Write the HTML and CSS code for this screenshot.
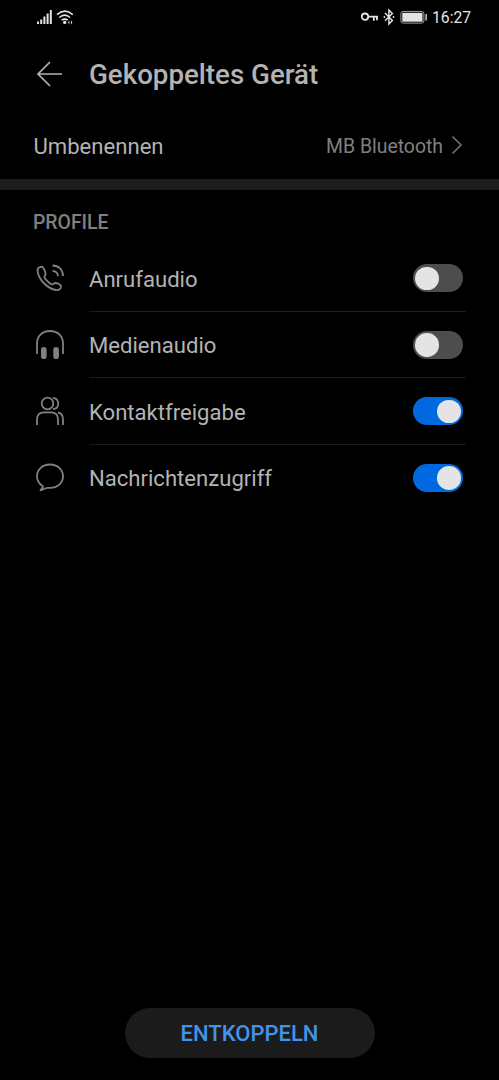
FILE: index.html
```html
<!DOCTYPE html>
<html lang="de">
<head>
  <meta charset="UTF-8" />
  <meta name="viewport" content="width=device-width, initial-scale=1" />
  <title>Gekoppeltes Gerät</title>
  <link rel="stylesheet" href="styles.css">
</head>
<body>

  <div class="statusbar">
    <svg class="status-left" width="70" height="35" viewBox="0 0 70 35" aria-hidden="true">
      <g fill="#e4e4e4">
        <rect x="12" y="21.5" width="2" height="2.5" />
        <rect x="15.2" y="19.5" width="2" height="4.5" />
        <rect x="18.4" y="16.5" width="2" height="7.5" />
        <rect x="21.6" y="13.5" width="2" height="10.5" />
        <rect x="24.8" y="10" width="2" height="14" />
        <circle cx="39.7" cy="22.4" r="1.7" />
        <path d="M43 22.5l1.4-2v4zM47.4 22.5l-1.4-2v4z" />
      </g>
      <path d="M32 14.6q7.9-7 15.8 0M34.3 17.5q5.4-4.6 10.8 0M36.7 20.2q3-2.2 6 0" fill="none" stroke="#e4e4e4" stroke-width="1.6" />
    </svg>
    <div class="status-right">
      <svg width="70" height="35" viewBox="0 0 70 35" aria-hidden="true">
        <g fill="none" stroke="#e4e4e4">
          <circle cx="5" cy="16.7" r="3.2" stroke-width="1.8" />
          <path d="M8.3 16.7H18M13.8 17v3.8M16.9 17v3.3" stroke-width="1.8" />
          <path d="M25 13l7.4 7.4-3.5 3.6V10l3.5 3.4-7.4 7.4" stroke-width="1.4" />
          <rect x="40.9" y="11.4" width="23" height="11.7" rx="2.2" stroke="#a0a0a0" stroke-width="1" />
        </g>
        <rect x="42.3" y="12.8" width="20.2" height="8.9" fill="#e4e4e4" />
        <rect x="65.4" y="14" width="1.5" height="6.5" fill="#c8c8c8" />
        <circle cx="24.4" cy="17" r=".9" fill="#e4e4e4" />
        <circle cx="33.5" cy="17" r=".9" fill="#e4e4e4" />
      </svg>
      <span class="time">16:27</span>
    </div>
  </div>

  <header class="header">
    <svg class="back" width="28" height="28" viewBox="0 0 28 28" aria-label="Zurück">
      <path d="M26 14H2M14 2L2 14l12 12" />
    </svg>
    <h1 class="title">Gekoppeltes Gerät</h1>
  </header>

  <div class="rename">
    <span class="label">Umbenennen</span>
    <span class="device">MB Bluetooth</span>
    <svg class="chevron" width="12" height="20" viewBox="0 0 12 20" aria-hidden="true">
      <path d="M1.5 1.5L10 10l-8.5 8.5" />
    </svg>
  </div>

  <div class="divider"></div>

  <h2 class="section">PROFILE</h2>

  <ul class="profiles">
    <li class="profile">
      <svg class="icon" viewBox="0 0 50 50" aria-hidden="true">
        <path d="M15.5 11.8C13.5 12.2 12.2 14.3 12.7 17C14 24.5 22 33.5 31 35C33.5 35.3 35.3 34.3 36 32.5C36.4 31.3 35.8 30.3 34.7 29.5C32.6 28.1 30.7 27.5 29 28.4L27.8 29.2C27 29.7 26 29.2 24.5 28C22.5 26.4 20.8 24.6 19.7 22.9C19.2 22.1 19.3 21.5 19.8 20.8C20.9 19.3 20.8 17.9 19.8 15.8L18.6 13.4C17.9 12.1 16.9 11.5 15.5 11.8Z" />
        <path d="M27.5 15.8C30.7 16 32.8 18 33 21.3M27.5 10.5C33.7 10.5 38 14.8 38 21" />
      </svg>
      <span class="name">Anrufaudio</span>
      <span class="toggle"></span>
    </li>
    <li class="profile">
      <svg class="icon" viewBox="0 0 50 50" aria-hidden="true">
        <path d="M12 32V21.5C12 14 17.5 9 25 9s13 5 13 12.5V32" />
        <rect class="solid" x="16" y="25" width="5.6" height="12" rx="2.8" />
        <rect class="solid" x="28.3" y="25" width="5.6" height="12" rx="2.8" />
      </svg>
      <span class="name">Medienaudio</span>
      <span class="toggle"></span>
    </li>
    <li class="profile">
      <svg class="icon" viewBox="0 0 50 50" aria-hidden="true">
        <circle cx="22.5" cy="15.5" r="5.8" />
        <path d="M27.8 9.8c3.4.3 5.4 2.7 5.4 5.7s-2 5.4-5.2 5.7" />
        <path d="M12 37v-5.5c0-4.7 2.5-7.2 7.2-7.2h6.6c4.7 0 7.2 2.5 7.2 7.2V37M33 24.5c3.3.6 5 3.2 5 7V37" />
      </svg>
      <span class="name">Kontaktfreigabe</span>
      <span class="toggle on"></span>
    </li>
    <li class="profile">
      <svg class="icon" viewBox="0 0 50 50" aria-hidden="true">
        <path d="M25 9.5c-7.5 0-13 5-13 11.8 0 4.2 2 7.5 5.4 9.5.6.4.7.9.3 1.5l-2.2 3 6-2.3c1-.3 2-.1 3.5-.1 7.5 0 13-4.9 13-11.6S32.5 9.5 25 9.5Z" />
      </svg>
      <span class="name">Nachrichtenzugriff</span>
      <span class="toggle on"></span>
    </li>
  </ul>

  <button class="unpair">ENTKOPPELN</button>

</body>
</html>
```
FILE: styles.css
```css
* {
  margin: 0;
  padding: 0;
  box-sizing: border-box;
}

body {
  display: flex;
  flex-direction: column;
  height: 1080px;
  background: #000;
  color: #b3b3b3;
  font-family: Roboto, sans-serif;
  font-size: 22.1px;
  overflow: hidden;
}

svg {
  display: block;
  flex-shrink: 0;
}

/* Status bar */
.statusbar {
  display: flex;
  justify-content: space-between;
  height: 35px;
  padding: 0 28px 0 25px;
}

.status-right {
  display: flex;
  align-items: center;
}

.time {
  width: 41px;
  padding-left: 2px;
  font-size: 15.7px;
  color: #e4e4e4;
  white-space: nowrap;
}

/* Header */
.header {
  display: flex;
  align-items: center;
  height: 78px;
  padding-left: 36px;
}

.back {
  margin-top: -1px;
  fill: none;
  stroke: #b3b3b3;
  stroke-width: 1.7;
}

.title {
  margin-left: 25px;
  font-size: 27.7px;
  font-weight: 500;
}

.rename {
  display: flex;
  align-items: center;
  height: 65.5px;
  padding: 0 36px 0 33px;
}

.label {
  padding-left: 0.5px;
}

.device {
  margin-left: auto;
  padding-top: 1px;
  font-size: 19.4px;
  color: #808080;
}

.chevron {
  margin: -1px 0 0 8px;
  fill: none;
  stroke: #707070;
  stroke-width: 1.6;
}

.divider {
  height: 11px;
  background: #1c1c1c;
}

/* Profiles */
.section {
  height: 55.5px;
  padding-left: 33px;
  line-height: 66px;
  font-size: 19.4px;
  font-weight: 500;
  color: #808080;
}

.profiles {
  list-style: none;
}

.profile {
  display: flex;
  align-items: center;
  height: 66.5px;
  padding: 0 36px 0 25px;
  background: linear-gradient(#1c1c1c, #1c1c1c) 89px 100% / 377px 1px no-repeat;
}

.profile:last-child {
  background: none;
}

.icon {
  width: 50px;
  height: 50px;
  margin-top: 3.5px;
  fill: none;
  stroke: #808080;
  stroke-width: 1.8;
  stroke-linejoin: round;
}

.icon .solid {
  fill: #808080;
  stroke: none;
}

.name {
  margin-left: 14px;
  padding-top: 0.5px;
}

.toggle {
  display: flex;
  align-items: center;
  width: 50.5px;
  height: 28px;
  margin-left: auto;
  padding: 0 2.5px;
  border-radius: 14px;
  background: #4d4d4d;
}

.toggle::before {
  content: "";
  width: 23.5px;
  height: 23.5px;
  border-radius: 50%;
  background: #e4e4e4;
}

.toggle.on {
  justify-content: flex-end;
  background: #0069e0;
}

.unpair {
  width: 250px;
  height: 50px;
  margin: auto auto 22px;
  border: none;
  border-radius: 25px;
  background: #1b1b1b;
  color: #4294ea;
  font-family: inherit;
  font-size: 22px;
  font-weight: 500;
}
```
